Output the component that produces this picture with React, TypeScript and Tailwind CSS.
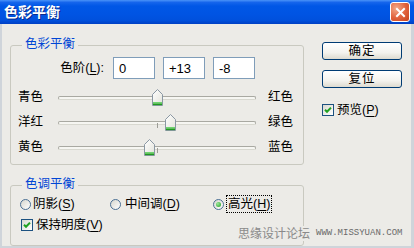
import React from "react";

const FONT = "font-['Liberation_Sans','Noto_Sans_CJK_SC',sans-serif]";

function U({ c }: { c: string }) {
  return <span className="underline underline-offset-[2px] decoration-[1px]">{c}</span>;
}

function Thumb({ v }: { v: number }) {
  return (
    <svg
      width="11"
      height="17"
      viewBox="0 0 11 17"
      className="absolute top-[4px]"
      style={{ left: 94 + v }}
    >
      <defs>
        <linearGradient id="tg" x1="0" y1="0" x2="1" y2="1">
          <stop offset="0" stopColor="#ffffff" />
          <stop offset="1" stopColor="#e2e2da" />
        </linearGradient>
      </defs>
      <path d="M0.5 5.5 L5.5 0.5 L10.5 5.5 L10.5 16.5 L0.5 16.5 Z" fill="url(#tg)" stroke="#8a97a3" strokeLinejoin="round" />
      <rect x="1" y="13" width="9" height="1.5" fill="#6fd46f" />
      <rect x="1" y="14.5" width="9" height="1.6" fill="#1f9a1f" />
    </svg>
  );
}

function SliderRow({ left, right, v }: { left: string; right: string; v: number }) {
  return (
    <div className="h-[25px] flex items-center">
      <div className="w-[40px] text-[12.5px] leading-none">{left}</div>
      <div className="relative w-[198px] h-full flex items-center">
        <div className="w-full h-[4px] rounded-[2px] border border-[#a9a9a2] border-b-[#d8d8d0] bg-[#f6f6f2]" />
        <div className="absolute left-[99px] top-[13px] w-[1px] h-[5px] bg-[#9c9c96]" />
        <Thumb v={v} />
      </div>
      <div className="ml-[12px] w-[26px] text-[12.5px] leading-none">{right}</div>
    </div>
  );
}

function Radio({ checked }: { checked?: boolean }) {
  return (
    <span className="w-[11px] h-[11px] rounded-full border border-[#4a6f94] bg-[linear-gradient(135deg,#d6d6ce,#ffffff)] flex items-center justify-center shrink-0">
      {checked && (
        <span className="w-[5px] h-[5px] rounded-full bg-[radial-gradient(circle_at_35%_35%,#9be89b,#1e9e1e)]" />
      )}
    </span>
  );
}

function Check() {
  return (
    <span className="w-[12px] h-[12px] border border-[#1c5180] bg-[linear-gradient(135deg,#d8d8d0,#ffffff)] flex items-center justify-center shrink-0">
      <svg width="8" height="8" viewBox="0 0 8 8">
        <path d="M1 3.8 L3 5.8 L7 1.6" stroke="#21a121" strokeWidth="2" fill="none" />
      </svg>
    </span>
  );
}

function Button({ label }: { label: string }) {
  return (
    <div className="w-[80px] h-[18px] rounded-[3px] border border-[#003c74] bg-[linear-gradient(to_bottom,#ffffff_0%,#f4f3ee_60%,#dedbd0_100%)] flex items-center justify-center text-[12.5px] leading-none tracking-[1px]">
      {label}
    </div>
  );
}

function Box({ children }: { children: React.ReactNode }) {
  return (
    <div className="w-[42px] h-[22px] border border-[#7f9db9] bg-white pl-[5px] flex items-center text-[13px] leading-none">
      {children}
    </div>
  );
}

export default function App() {
  return (
    <div className={`relative w-[414px] h-[248px] flex flex-col bg-[#ecebe7] text-black overflow-hidden ${FONT}`}>
      {/* title bar */}
      <div className="h-[24px] shrink-0 flex items-center justify-between pl-[4px] pr-[4px] bg-[linear-gradient(to_bottom,#4a93f8_0%,#1565ec_10%,#0057e6_25%,#0054e3_60%,#0050dc_85%,#0040c4_100%)]">
        <span className="text-white font-bold text-[14px] leading-none [text-shadow:1px_1px_0_#0a2a8c]">色彩平衡</span>
        <div className="w-[20px] h-[20px] rounded-[3px] border border-white bg-[radial-gradient(circle_at_30%_30%,#f3a98a,#e0603a_55%,#c6431d)] flex items-center justify-center">
          <svg width="11" height="11" viewBox="0 0 11 11">
            <path d="M2 2 L9 9 M9 2 L2 9" stroke="#ffffff" strokeWidth="2" strokeLinecap="square" />
          </svg>
        </div>
      </div>

      {/* body */}
      <div className="flex-1 flex border-l-2 border-r-[3px] border-b-2 border-[#cfd4da]">
        <div className="pl-[8px] pt-[13px] flex flex-col">
          <fieldset className="w-[294px] border border-[#c9c9c0] rounded-[3px] pl-[7px] pr-[9px] pt-[4px] pb-[4px]">
            <legend className="ml-[4px] px-[3px] pb-[2px] text-[12.5px] leading-[14px] text-[#0046d5]">色彩平衡</legend>
            <div className="h-[22px] flex items-center">
              <div className="w-[95px] pr-[9px] text-right text-[12.5px] leading-none">
                色阶(<U c="L" />):
              </div>
              <Box>0</Box>
              <div className="w-[8px]" />
              <Box>+13</Box>
              <div className="w-[8px]" />
              <Box>-8</Box>
            </div>
            <div className="mt-[6px]">
              <SliderRow left="青色" right="红色" v={0} />
              <SliderRow left="洋红" right="绿色" v={13} />
              <SliderRow left="黄色" right="蓝色" v={-8} />
            </div>
          </fieldset>

          <fieldset className="mt-[12px] w-[294px] border border-[#c9c9c0] rounded-[3px] pl-[9px] pr-[9px] pt-[2px] pb-[11px]">
            <legend className="ml-[2px] px-[3px] pb-[2px] text-[12.5px] leading-[14px] text-[#0046d5]">色调平衡</legend>
            <div className="h-[18px] flex items-center text-[12.5px] leading-none">
              <div className="w-[90px] flex items-center gap-[2px]">
                <Radio />
                <span>阴影(<U c="S" />)</span>
              </div>
              <div className="w-[103px] flex items-center gap-[4px]">
                <Radio />
                <span>中间调(<U c="D" />)</span>
              </div>
              <div className="flex items-center gap-[3px]">
                <Radio checked />
                <span className="px-[1px] py-[2px] outline outline-1 outline-dotted outline-black">高光(<U c="H" />)</span>
              </div>
            </div>
            <div className="mt-[3px] h-[18px] flex items-center gap-[3px] ml-[1px] text-[12.5px] leading-none">
              <Check />
              <span>保持明度(<U c="V" />)</span>
            </div>
          </fieldset>
        </div>

        <div className="ml-[18px] pt-[18px] flex flex-col">
          <Button label="确定" />
          <div className="h-[10px]" />
          <Button label="复位" />
          <div className="mt-[14px] h-[16px] flex items-center gap-[3px] text-[12.5px] leading-none">
            <Check />
            <span>预览(<U c="P" />)</span>
          </div>
        </div>
      </div>

      {/* watermark */}
      <div className="absolute left-[238px] top-[226px] h-[15px] pr-[8px] flex items-center bg-[#ecebe7] text-[#8a8a8a]">
        <span className="text-[12px] leading-none">思缘设计论坛</span>
        <span className="ml-[6px] text-[9px] leading-none text-[#6a6a6a] font-['Liberation_Mono',monospace]">WWW.MISSYUAN.COM</span>
      </div>
    </div>
  );
}
